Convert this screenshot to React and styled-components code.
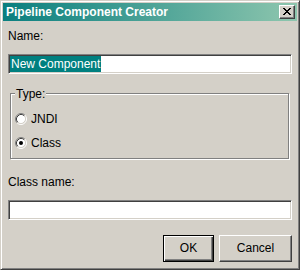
import React from "react";
import styled, { createGlobalStyle } from "styled-components";

const Global = createGlobalStyle`
  html, body { margin: 0; padding: 0; background: #D4D0C8; }
  body { font-family: "Liberation Sans", Arial, sans-serif; font-size: 12px; color: #000; }
`;

const Window = styled.div`
  box-sizing: border-box;
  width: 300px;
  height: 270px;
  background: #D4D0C8;
  border: 1px solid;
  border-color: #D4D0C8 #404040 #404040 #D4D0C8;
  box-shadow: inset 1px 1px #fff, inset -1px -1px #808080;
  padding: 2px;
  display: flex;
  flex-direction: column;
`;

const TitleBar = styled.div`
  height: 18px;
  background: linear-gradient(to right, #0A7F7F, #8EC6AE);
  display: flex;
  align-items: center;
  padding: 0 2px 0 3px;
`;

const Title = styled.span`
  flex: 1;
  color: #fff;
  font-weight: bold;
  font-size: 12px;
  line-height: 18px;
  white-space: nowrap;
`;

const CloseButton = styled.div`
  box-sizing: border-box;
  width: 16px;
  height: 14px;
  background: #D4D0C8;
  border: 1px solid;
  border-color: #fff #404040 #404040 #fff;
  box-shadow: inset -1px -1px #808080;
  display: flex;
  align-items: center;
  justify-content: center;
  padding-right: 1px;
  padding-bottom: 1px;
`;

const Content = styled.div`
  flex: 1;
  display: flex;
  flex-direction: column;
  padding: 0 5px;
`;

const Label = styled.div`
  line-height: 14px;
  margin-top: ${(p) => p.$mt}px;
  white-space: nowrap;
`;

const TextField = styled.div`
  box-sizing: border-box;
  height: 20px;
  margin-top: 11px;
  background: #fff;
  border: 1px solid;
  border-color: #808080 #fff #fff #808080;
  box-shadow: inset 1px 1px #404040, inset -1px -1px #D4D0C8;
  padding: 1px 1px;
  display: flex;
  align-items: center;
  white-space: nowrap;
`;

const Selected = styled.span`
  display: inline-block;
  background: #008080;
  color: #fff;
  line-height: 16px;
  padding: 0 1px 0 1px;
`;

const GroupBox = styled.div`
  position: relative;
  box-sizing: border-box;
  margin: 19px 3px 0 2px;
  border: 1px solid #808080;
  box-shadow: inset 1px 1px #fff, 1px 1px #fff;
  padding: 13px 0 3px 4px;
  display: flex;
  flex-direction: column;
`;

const Legend = styled.span`
  position: absolute;
  top: -7px;
  left: 4px;
  padding: 0 1px;
  background: #D4D0C8;
  line-height: 14px;
`;

const RadioRow = styled.div`
  height: 24px;
  display: flex;
  align-items: center;
  gap: 4px;
`;

const ButtonRow = styled.div`
  display: flex;
  justify-content: flex-end;
  gap: 5px;
  margin-top: 15px;
`;

const Button = styled.div`
  box-sizing: border-box;
  width: ${(p) => p.$w}px;
  height: 27px;
  display: flex;
  align-items: center;
  justify-content: center;
  background: #D4D0C8;
  border: 1px solid;
  border-color: ${(p) => (p.$default ? "#000" : "#fff #404040 #404040 #fff")};
  box-shadow: ${(p) =>
    p.$default
      ? "inset 1px 1px #fff, inset -1px -1px #404040, inset -2px -2px #808080"
      : "inset -1px -1px #808080"};
  padding-bottom: 1px;
`;

const Radio = ({ checked }) => (
  <svg width="12" height="12" viewBox="0 0 12 12">
    <circle cx="6" cy="6" r="4.5" fill="#fff" />
    <path d="M2.11 9.89 A5.5 5.5 0 0 1 9.89 2.11" fill="none" stroke="#808080" strokeWidth="1" />
    <path d="M9.89 2.11 A5.5 5.5 0 0 1 2.11 9.89" fill="none" stroke="#fff" strokeWidth="1" />
    <path d="M2.82 9.18 A4.5 4.5 0 0 1 9.18 2.82" fill="none" stroke="#404040" strokeWidth="1" />
    <path d="M9.18 2.82 A4.5 4.5 0 0 1 2.82 9.18" fill="none" stroke="#D4D0C8" strokeWidth="1" />
    {checked && <circle cx="6" cy="6" r="2" fill="#000" />}
  </svg>
);

const CloseIcon = () => (
  <svg width="8" height="7" viewBox="0 0 8 7" shapeRendering="crispEdges">
    <path
      d="M0 0h2v1h-2zM6 0h2v1h-2zM1 1h2v1h-2zM5 1h2v1h-2zM2 2h4v1h-4zM3 3h2v1h-2zM2 4h4v1h-4zM1 5h2v1h-2zM5 5h2v1h-2zM0 6h2v1h-2zM6 6h2v1h-2z"
      fill="#000"
    />
  </svg>
);

export default function App() {
  return (
    <>
      <Global />
      <Window>
        <TitleBar>
          <Title>Pipeline Component Creator</Title>
          <CloseButton>
            <CloseIcon />
          </CloseButton>
        </TitleBar>
        <Content>
          <Label $mt={8}>Name:</Label>
          <TextField>
            <Selected>New Component</Selected>
          </TextField>
          <GroupBox>
            <Legend>Type:</Legend>
            <RadioRow>
              <Radio />
              <span>JNDI</span>
            </RadioRow>
            <RadioRow>
              <Radio checked />
              <span>Class</span>
            </RadioRow>
          </GroupBox>
          <Label $mt={16}>Class name:</Label>
          <TextField />
          <ButtonRow>
            <Button $w={51} $default>OK</Button>
            <Button $w={73}>Cancel</Button>
          </ButtonRow>
        </Content>
      </Window>
    </>
  );
}
